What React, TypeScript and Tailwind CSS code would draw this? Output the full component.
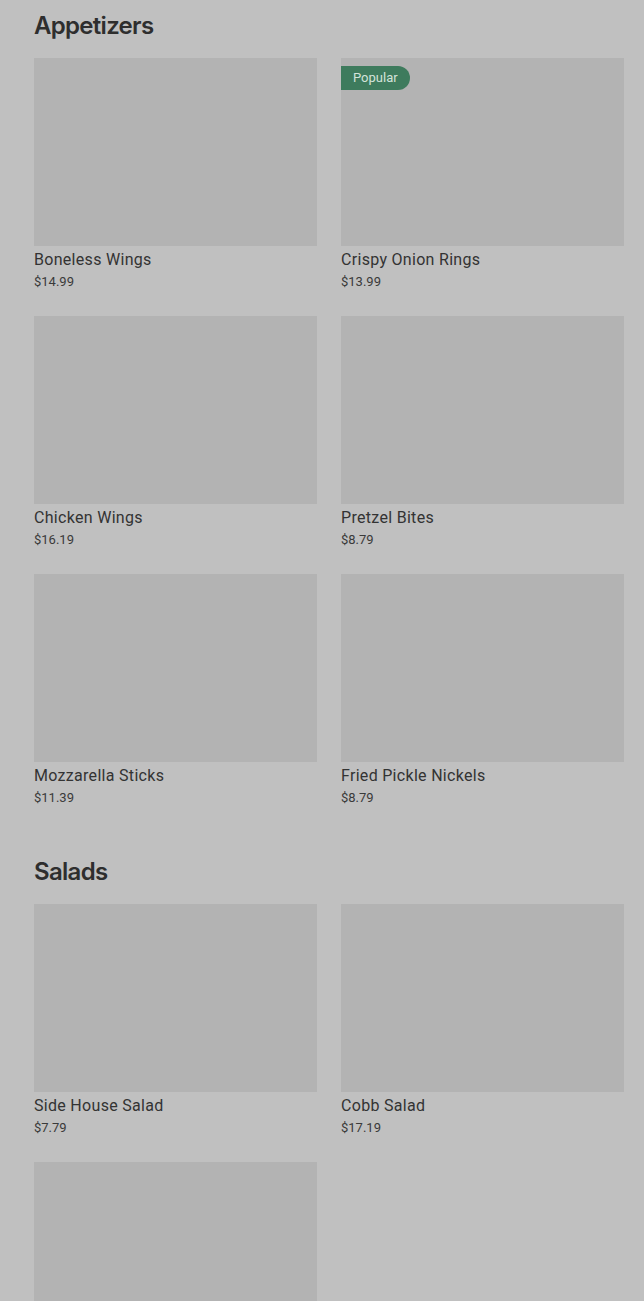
import React from 'react';

type Item = { name: string; price: string; popular?: boolean };

const sections: { title: string; items: Item[] }[] = [
  {
    title: 'Appetizers',
    items: [
      { name: 'Boneless Wings', price: '$14.99' },
      { name: 'Crispy Onion Rings', price: '$13.99', popular: true },
      { name: 'Chicken Wings', price: '$16.19' },
      { name: 'Pretzel Bites', price: '$8.79' },
      { name: 'Mozzarella Sticks', price: '$11.39' },
      { name: 'Fried Pickle Nickels', price: '$8.79' },
    ],
  },
  {
    title: 'Salads',
    items: [
      { name: 'Side House Salad', price: '$7.79' },
      { name: 'Cobb Salad', price: '$17.19' },
      // third card only shows its photo inside the viewport
      { name: '', price: '' },
    ],
  },
];

function MenuCard({ item }: { item: Item }) {
  return (
    <div className="flex flex-col">
      <div className="relative h-[188px] w-full bg-[#b3b3b3]">
        {item.popular && (
          <span className="absolute left-0 top-2 flex h-6 items-center rounded-r-full bg-[#3e7b5d] px-3 text-[13px] text-[#d3e3da]">
            Popular
          </span>
        )}
      </div>
      {item.name && (
        <div className="pt-[2px]">
          <p className="text-base leading-6 tracking-[0.3px] text-[#333]">{item.name}</p>
          <p className="text-[13px] leading-5 text-[#3a3a3a]">{item.price}</p>
        </div>
      )}
    </div>
  );
}

export default function App() {
  return (
    <div className="h-[1301px] overflow-hidden bg-[#c0c0c0] pl-[34px] pr-5 pt-[10px] font-['Roboto',sans-serif]">
      {sections.map((section, i) => (
        <section key={section.title} className={i > 0 ? 'mt-12' : ''}>
          <h2 className="mb-4 font-['Inter',sans-serif] text-2xl leading-8 font-semibold tracking-[-0.7px] text-[#2e2e2e]">
            {section.title}
          </h2>
          <div className="grid grid-cols-2 gap-x-6 gap-y-6">
            {section.items.map((item, j) => (
              <MenuCard key={section.title + j} item={item} />
            ))}
          </div>
        </section>
      ))}
    </div>
  );
}
